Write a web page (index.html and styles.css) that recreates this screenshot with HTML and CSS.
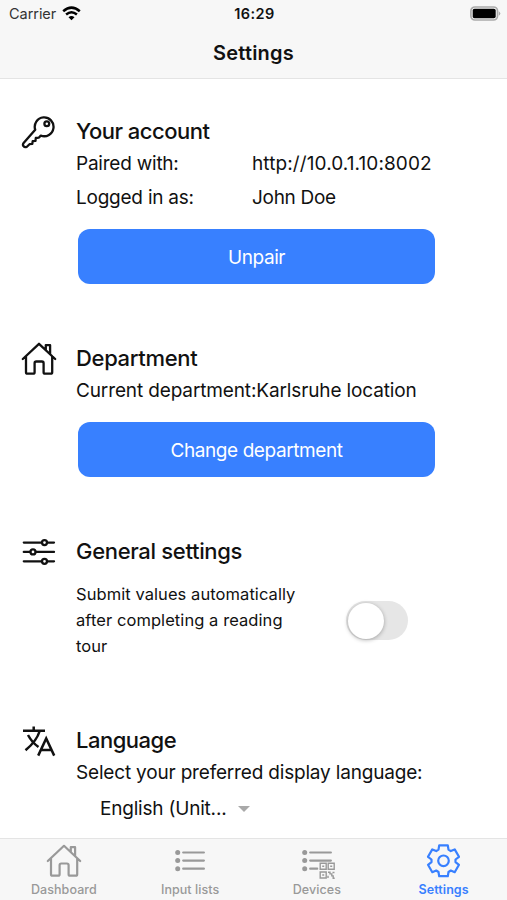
FILE: index.html
```html
<!DOCTYPE html>
<html lang="en">
<head>
<meta charset="utf-8">
<title>Settings</title>
<link rel="stylesheet" href="styles.css">
</head>
<body>
<svg class="defs" width="0" height="0" aria-hidden="true">
  <symbol id="house" viewBox="0 0 36 36"><path d="M1.8 18 18 2.8 34.2 18M5 15.5v15.7q0 1.5 1.5 1.5h5.6q1.5 0 1.5-1.5v-9q0-1.7 1.7-1.7h5.6q1.7 0 1.7 1.7v9q0 1.5 1.5 1.5h5.6q1.5 0 1.5-1.5V15.5M24.8 8.6V4.2h4.3v8.2"/></symbol>
</svg>
<div class="app">
  <header class="header">
    <div class="status">
      <div class="carrier"><span>Carrier</span>
        <svg width="19" height="15" viewBox="0 0 19 15" fill="none" stroke="#000" stroke-width="2.5"><path d="M1.2 5.3Q9.5-2 17.8 5.3M4.1 8.5q5.4-4.6 10.8 0"/><path d="M6.5 11.2q3-2.5 6 0l-3 3z" fill="#000" stroke="none"/></svg>
      </div>
      <div class="clock">16:29</div>
      <svg class="battery" width="31" height="16" viewBox="0 0 31 16"><rect x=".9" y="1" width="26.6" height="13" rx="4" fill="#f7f7f7" stroke="#aaa" stroke-width="1.7"/><rect x="2.7" y="2.8" width="23" height="9.4" rx="1.8"/><path d="M28.8 5.2q3 2.3 0 4.6z" fill="#aaa"/></svg>
    </div>
    <h1>Settings</h1>
  </header>
  <main class="content">
    <section class="section account">
      <svg class="icon" width="36" height="36" viewBox="0 0 36 36"><path d="M14.2 15.7A9.4 9.4 0 1 1 19.8 21.6L17.7 23.7 14.8 24l-.3 2.8-2.8.3-.4 2.8-2.8.3-2.6 2.6q-2.1 1-3.5-.7-1-1.6.2-3z"/><circle cx="25.8" cy="9.8" r="2.4"/></svg>
      <div class="body">
        <h2 class="h-account">Your account</h2>
        <div class="pair"><span class="t-paired">Paired with:</span><span class="t-url">http://10.0.1.10:8002</span></div>
        <div class="pair"><span class="t-paired">Logged in as:</span><span class="t-john">John Doe</span></div>
        <button class="button">Unpair</button>
      </div>
    </section>
    <section class="section department">
      <svg class="icon" width="36" height="36"><use href="#house"/></svg>
      <div class="body">
        <h2 class="h-department">Department</h2>
        <p class="line">Current department:Karlsruhe location</p>
        <button class="button">Change department</button>
      </div>
    </section>
    <section class="section general">
      <svg class="icon" width="36" height="36" viewBox="0 0 36 36"><path d="M2.8 8.6H20.5M26.5 8.6H33M2.8 17.9h6M15 17.9h18M2.8 27.3H20.5M26.5 27.3H33"/><circle cx="23.5" cy="8.6" r="2.5"/><circle cx="12" cy="17.9" r="2.5"/><circle cx="23.5" cy="27.3" r="2.5"/></svg>
      <div class="body">
        <h2 class="h-general">General settings</h2>
        <div class="option">
          <p class="hint">Submit values automatically<br>after completing a reading<br>tour</p>
          <div class="toggle"><div class="knob"></div></div>
        </div>
      </div>
    </section>
    <section class="section language">
      <svg class="icon translate" width="36" height="36" viewBox="0 0 36 36"><path d="M2 7.7h22M12.7 3.5v4M18.7 8Q15.7 18 4.5 27.3M7 12q4 7.5 10.5 12M17.2 32.6l8-17.2 8 17.2M19.8 27h10.8"/></svg>
      <div class="body">
        <h2 class="h-account">Language</h2>
        <p class="line">Select your preferred display language:</p>
        <div class="select"><span>English (Unit...</span><svg width="12" height="6" viewBox="0 0 12 6"><path d="M0 0h12L6 6z" fill="#a9a9a9"/></svg></div>
      </div>
    </section>
  </main>
  <nav class="tabs">
    <div class="tab home"><svg width="36" height="36"><use href="#house"/></svg><span>Dashboard</span></div>
    <div class="tab"><svg width="36" height="36" viewBox="0 0 36 36"><path d="M11.2 9.5h20.7M11.2 17.6h20.7M11.2 25.7h20.7"/><g class="dots"><circle cx="5.7" cy="9.5" r="2.5"/><circle cx="5.7" cy="17.6" r="2.5"/><circle cx="5.7" cy="25.7" r="2.5"/></g></svg><span>Input lists</span></div>
    <div class="tab"><svg width="36" height="36" viewBox="0 0 36 36"><path d="M11.2 9.5h20.7M11.2 17.6h20.7M11.2 25.7h7"/><g class="dots"><circle cx="5.7" cy="9.5" r="2.5"/><circle cx="5.7" cy="17.6" r="2.5"/><circle cx="5.7" cy="25.7" r="2.5"/></g><path class="clear" d="M20 19h16v17H20z"/><g class="qr"><path d="M21.2 20.2h6v6h-6zM29.2 20.2h6v6h-6zM21.2 29h6v6h-6z"/><path d="M23.2 23.2h2M31.2 23.2h2M23.2 32h2M29 29.3h2v1.6h1.8v2h1.4v2.3h1.5M33.5 29.5h2M29 32.7v2.4"/></g></svg><span>Devices</span></div>
    <div class="tab active"><svg width="36" height="36" viewBox="-17.5 -17.8 36 36"><path d="M-4.3-15.4H4.3L5-11.2 7.3-9.7 11.2-11.4 15.5-4 12-1.3V1.3L15.5 4 11.2 11.4 7.3 9.7 5 11.2 4.3 15.4H-4.3L-5 11.2-7.3 9.7-11.2 11.4-15.5 4-12 1.3V-1.3L-15.5-4-11.2-11.4-7.3-9.7-5-11.2z"/><circle r="5.3"/></svg><span>Settings</span></div>
  </nav>
</div>
</body>
</html>
```
FILE: styles.css
```css
* { box-sizing: border-box; }
body { margin: 0; background: #fff; color: #111; font-family: Inter, "Liberation Sans", sans-serif; }
h1, h2, p { margin: 0; }
svg { display: block; flex: none; }
.defs { position: absolute; }
.app { display: flex; flex-direction: column; width: 507px; height: 900px; overflow: hidden; }

.header { height: 79px; flex: none; background: #f7f7f7; border-bottom: 1px solid #e4e4e4; }
.status { display: grid; grid-template-columns: 1fr auto 1fr; align-items: center; height: 27px; padding: 0 6px 0 9px; font-size: 14.5px; }
.carrier { display: flex; align-items: center; gap: 6px; color: #333; letter-spacing: -.05px; }
.carrier svg { margin-top: -1px; }
.clock { font-weight: 600; letter-spacing: .4px; margin-left: -1px; }
.battery { justify-self: end; }
h1 { font-size: 20px; line-height: 52px; font-weight: 600; text-align: center; letter-spacing: .2px; }

.content { flex: 1; min-height: 0; padding: 35px 0 0 21px; }
.section { display: flex; gap: 19px; }
.icon { fill: none; stroke: #111; stroke-width: 2.3; stroke-linejoin: round; stroke-linecap: round; }
.translate { stroke-width: 2.5; stroke-linecap: butt; stroke-linejoin: miter; }
.body { flex: 1; min-width: 0; }
.account { height: 227px; }
.department { height: 193px; }
.general { height: 189px; }
h2 { font-size: 22px; line-height: 34px; font-weight: 500; white-space: nowrap; }
.h-account { letter-spacing: -.5px; }
.h-department { letter-spacing: -.33px; }
.h-general { letter-spacing: -.32px; }
.pair { display: grid; grid-template-columns: 176px 1fr; height: 34px; line-height: 32px; font-size: 19px; white-space: nowrap; }
.t-paired { letter-spacing: -.23px; }
.t-url { letter-spacing: .1px; }
.t-john { letter-spacing: -.3px; }
.line { font-size: 19px; line-height: 32px; white-space: nowrap; letter-spacing: -.13px; }
.language .line { letter-spacing: -.18px; }
.button { display: block; width: 357px; height: 55px; margin: 13px 0 0 2px; padding: 2px 0 0; border: 0; border-radius: 12px; background: #3880ff; color: #fff; font: 400 19px/53px Inter, sans-serif; letter-spacing: -.42px; }
.department .button { margin-top: 15px; }
.option { display: flex; align-items: center; margin-top: 14px; }
.hint { width: 269px; font-size: 16.5px; line-height: 25.8px; white-space: nowrap; letter-spacing: .07px; }
.toggle { width: 62px; height: 39px; padding: 1.5px; margin-left: 1px; border-radius: 20px; background: #e6e6e6; }
.knob { width: 36px; height: 36px; border-radius: 50%; background: #fff; box-shadow: 0 1px 4px rgba(0,0,0,.3); }
.select { display: flex; align-items: center; gap: 12px; height: 39px; padding-left: 24px; font-size: 19px; white-space: nowrap; letter-spacing: -.2px; }

.tabs { display: grid; grid-template-columns: repeat(4, 1fr); height: 62px; flex: none; background: #f7f7f7; border-top: 1px solid #e4e4e4; }
.tab { display: flex; flex-direction: column; align-items: center; padding-top: 4px; color: #999; font-size: 12.5px; line-height: 17px; font-weight: 500; letter-spacing: .07px; }
.home { padding-left: 1px; }
.tab svg { fill: none; stroke: #999; stroke-width: 2.2; stroke-linejoin: round; stroke-linecap: round; }
.tab span { margin-top: 2px; }
.tab .dots { fill: #999; stroke: none; }
.tab .clear { fill: #f7f7f7; stroke: none; }
.tab .qr { stroke-width: 1.4; stroke-linejoin: miter; stroke-linecap: butt; }
.tab.active { color: #3880ff; font-weight: 600; }
.tab.active svg { stroke: #3880ff; }
```
